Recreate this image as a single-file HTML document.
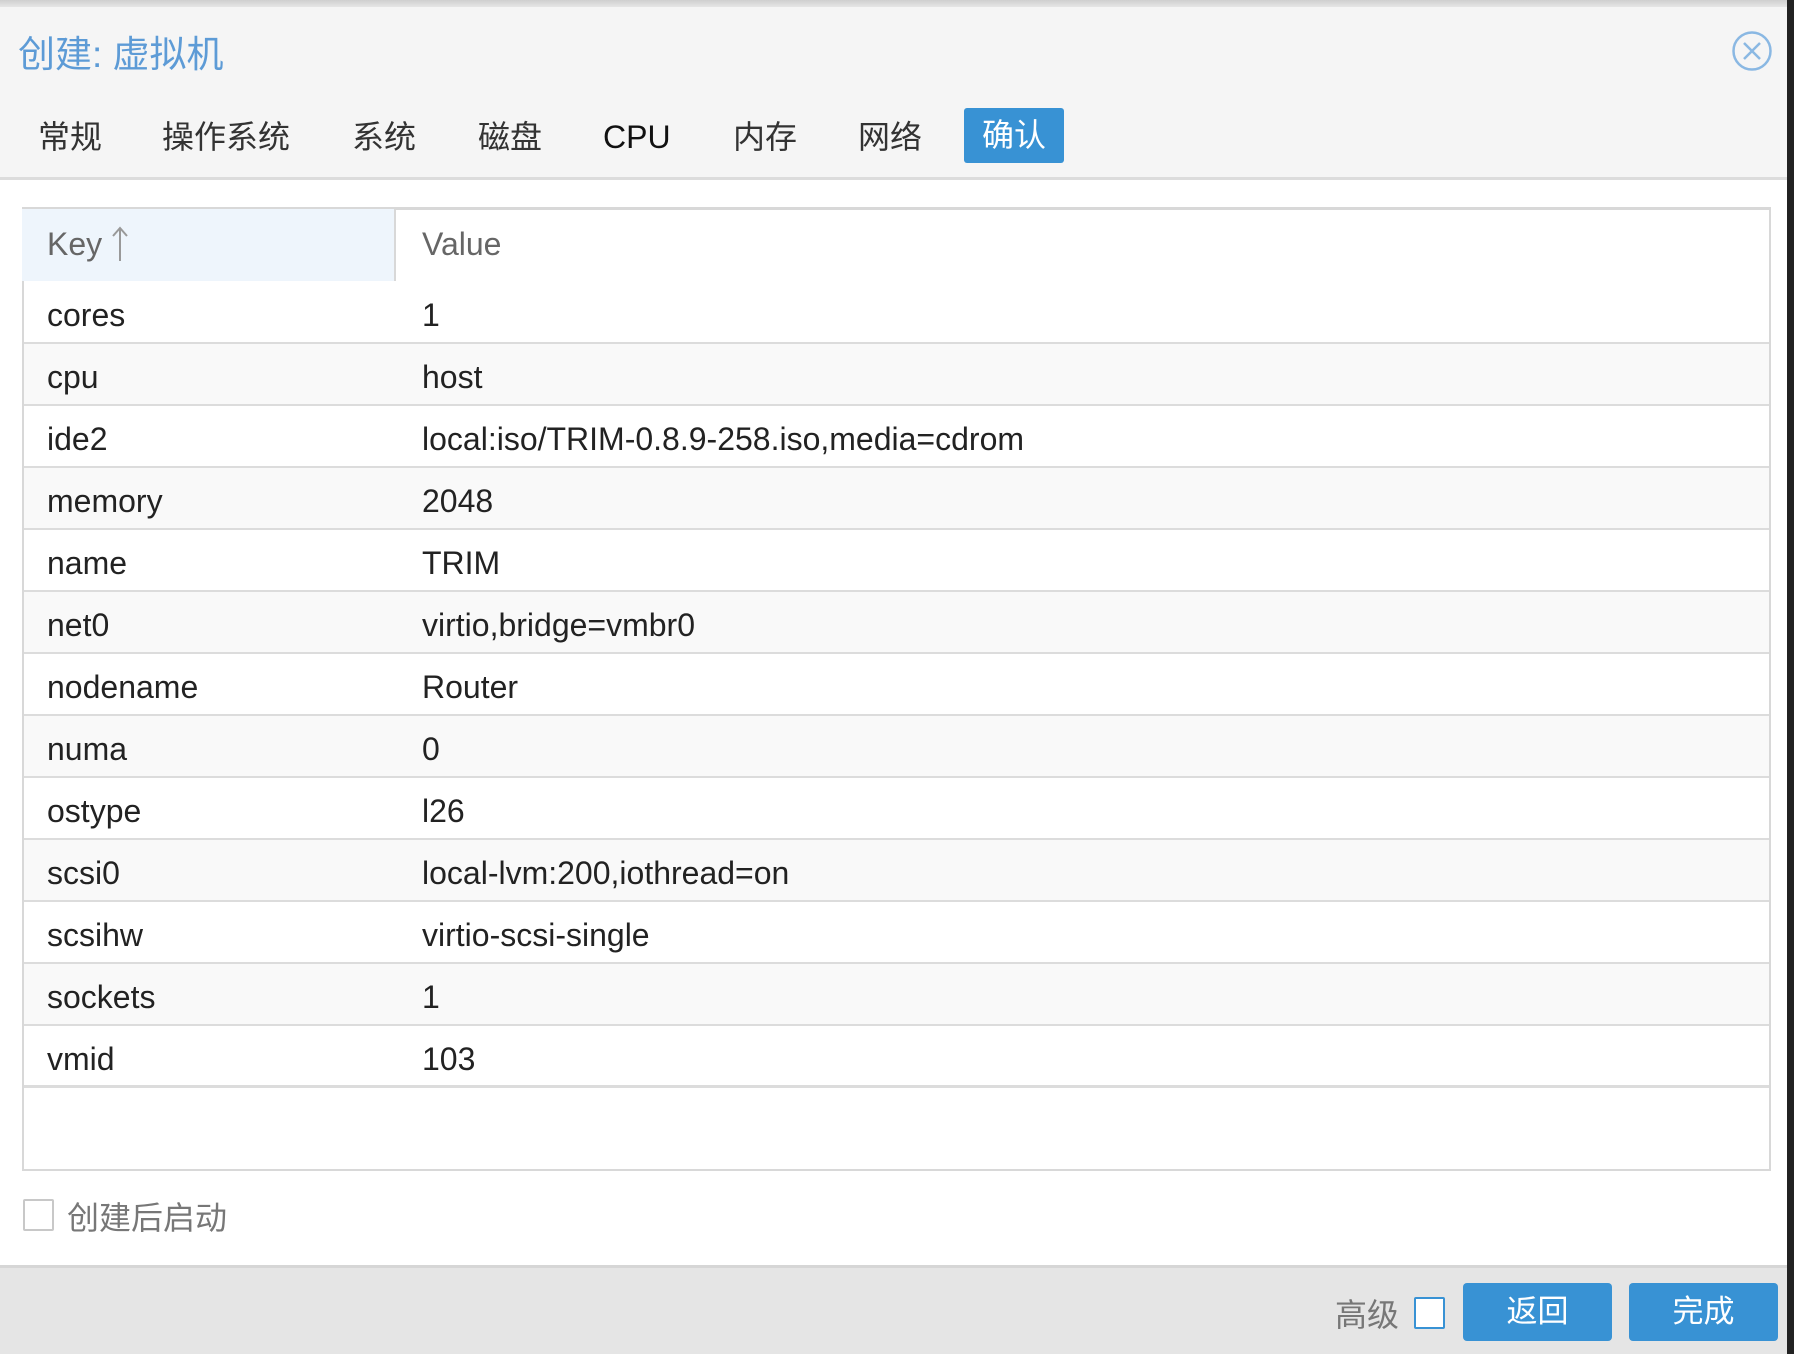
<!DOCTYPE html>
<html><head><meta charset="utf-8"><style>
*{margin:0;padding:0;box-sizing:border-box}
body{width:1794px;height:1354px;overflow:hidden;background:#fff;position:relative;font-family:"Liberation Sans","Noto Sans CJK SC",sans-serif}
.abs{position:absolute}
.top{left:0;top:0;width:1794px;height:7px;background:linear-gradient(#cfcfcf,#e6e6e6)}
.hdr{left:0;top:7px;width:1787px;height:173px;background:#f5f5f5;border-bottom:3px solid #dcdcdc}
.title{left:18px;top:24px;font-size:37px;color:#5d9bd6;white-space:nowrap}
.tab{top:116px;font-size:32px;color:#333;white-space:nowrap;line-height:42px}
.tabsel{left:964px;top:108px;width:100px;height:55px;background:#3892d4;border-radius:3px;color:#fff;font-size:32px;line-height:55px;text-align:center}
.grid{left:22px;top:207px;width:1749px;height:964px;border:2px solid #d8d8d8;border-top:3px solid #d8d8d8}
.hk{left:22px;top:209px;width:374px;height:72px;background:#eef5fc;border-right:2px solid #d8d8d8}
.hcell{top:226px;font-size:32px;color:#666}
.row{left:24px;width:1745px;height:62px;border-bottom:2px solid #dcdcdc;font-size:32px;color:#222;line-height:66px}
.row span{position:absolute}
.row .k{left:23px}.row .v{left:398px}
.alt{background:#f9f9f9}
.cb{width:31px;height:32px;border:2px solid #c8c8c8;background:#fff;border-radius:2px}
.foot{left:0;top:1265px;width:1787px;height:89px;background:#e5e5e5;border-top:3px solid #d6d6d6}
.btn{top:1283px;width:149px;height:58px;background:#3892d4;border-radius:4px;color:#fff;font-size:31px;text-align:center;line-height:58px}
.rbar{left:1787px;top:0;width:7px;height:1354px;background:#222}
</style></head><body>
<div class="abs top"></div>
<div class="abs hdr"></div>
<div class="abs title">创建: 虚拟机</div>
<svg class="abs" style="left:1731px;top:30px" width="42" height="42" viewBox="0 0 42 42"><circle cx="21" cy="21" r="18.5" fill="none" stroke="#8ab8e3" stroke-width="2.5"/><path d="M13 13L29 29M29 13L13 29" stroke="#8ab8e3" stroke-width="2.5"/></svg>
<div class="abs tab" style="left:38px">常规</div>
<div class="abs tab" style="left:162px">操作系统</div>
<div class="abs tab" style="left:352px">系统</div>
<div class="abs tab" style="left:478px">磁盘</div>
<div class="abs tab" style="left:603px;color:#111">CPU</div>
<div class="abs tab" style="left:733px">内存</div>
<div class="abs tab" style="left:858px">网络</div>
<div class="abs tabsel">确认</div>

<div class="abs grid"></div>
<div class="abs hk"></div>
<div class="abs hcell" style="left:47px">Key</div>
<svg class="abs" style="left:112px;top:226px" width="16" height="36" viewBox="0 0 16 36"><path d="M8 35V2M1 10L8 2L15 10" fill="none" stroke="#999" stroke-width="2"/></svg>
<div class="abs hcell" style="left:422px">Value</div>

<div class="abs row" style="top:282px"><span class="k">cores</span><span class="v">1</span></div>
<div class="abs row alt" style="top:344px"><span class="k">cpu</span><span class="v">host</span></div>
<div class="abs row" style="top:406px"><span class="k">ide2</span><span class="v">local:iso/TRIM-0.8.9-258.iso,media=cdrom</span></div>
<div class="abs row alt" style="top:468px"><span class="k">memory</span><span class="v">2048</span></div>
<div class="abs row" style="top:530px"><span class="k">name</span><span class="v">TRIM</span></div>
<div class="abs row alt" style="top:592px"><span class="k">net0</span><span class="v">virtio,bridge=vmbr0</span></div>
<div class="abs row" style="top:654px"><span class="k">nodename</span><span class="v">Router</span></div>
<div class="abs row alt" style="top:716px"><span class="k">numa</span><span class="v">0</span></div>
<div class="abs row" style="top:778px"><span class="k">ostype</span><span class="v">l26</span></div>
<div class="abs row alt" style="top:840px"><span class="k">scsi0</span><span class="v">local-lvm:200,iothread=on</span></div>
<div class="abs row" style="top:902px"><span class="k">scsihw</span><span class="v">virtio-scsi-single</span></div>
<div class="abs row alt" style="top:964px"><span class="k">sockets</span><span class="v">1</span></div>
<div class="abs row" style="top:1026px;border-bottom:3px solid #dcdcdc"><span class="k">vmid</span><span class="v">103</span></div>

<div class="abs cb" style="left:23px;top:1199px"></div>
<div class="abs" style="left:67px;top:1193px;font-size:32px;color:#777">创建后启动</div>

<div class="abs foot"></div>
<div class="abs" style="left:1335px;top:1290px;font-size:32px;color:#777">高级</div>
<div class="abs cb" style="left:1414px;top:1297px;border-color:#3892d4"></div>
<div class="abs btn" style="left:1463px">返回</div>
<div class="abs btn" style="left:1629px">完成</div>
<div class="abs rbar"></div>
</body></html>
